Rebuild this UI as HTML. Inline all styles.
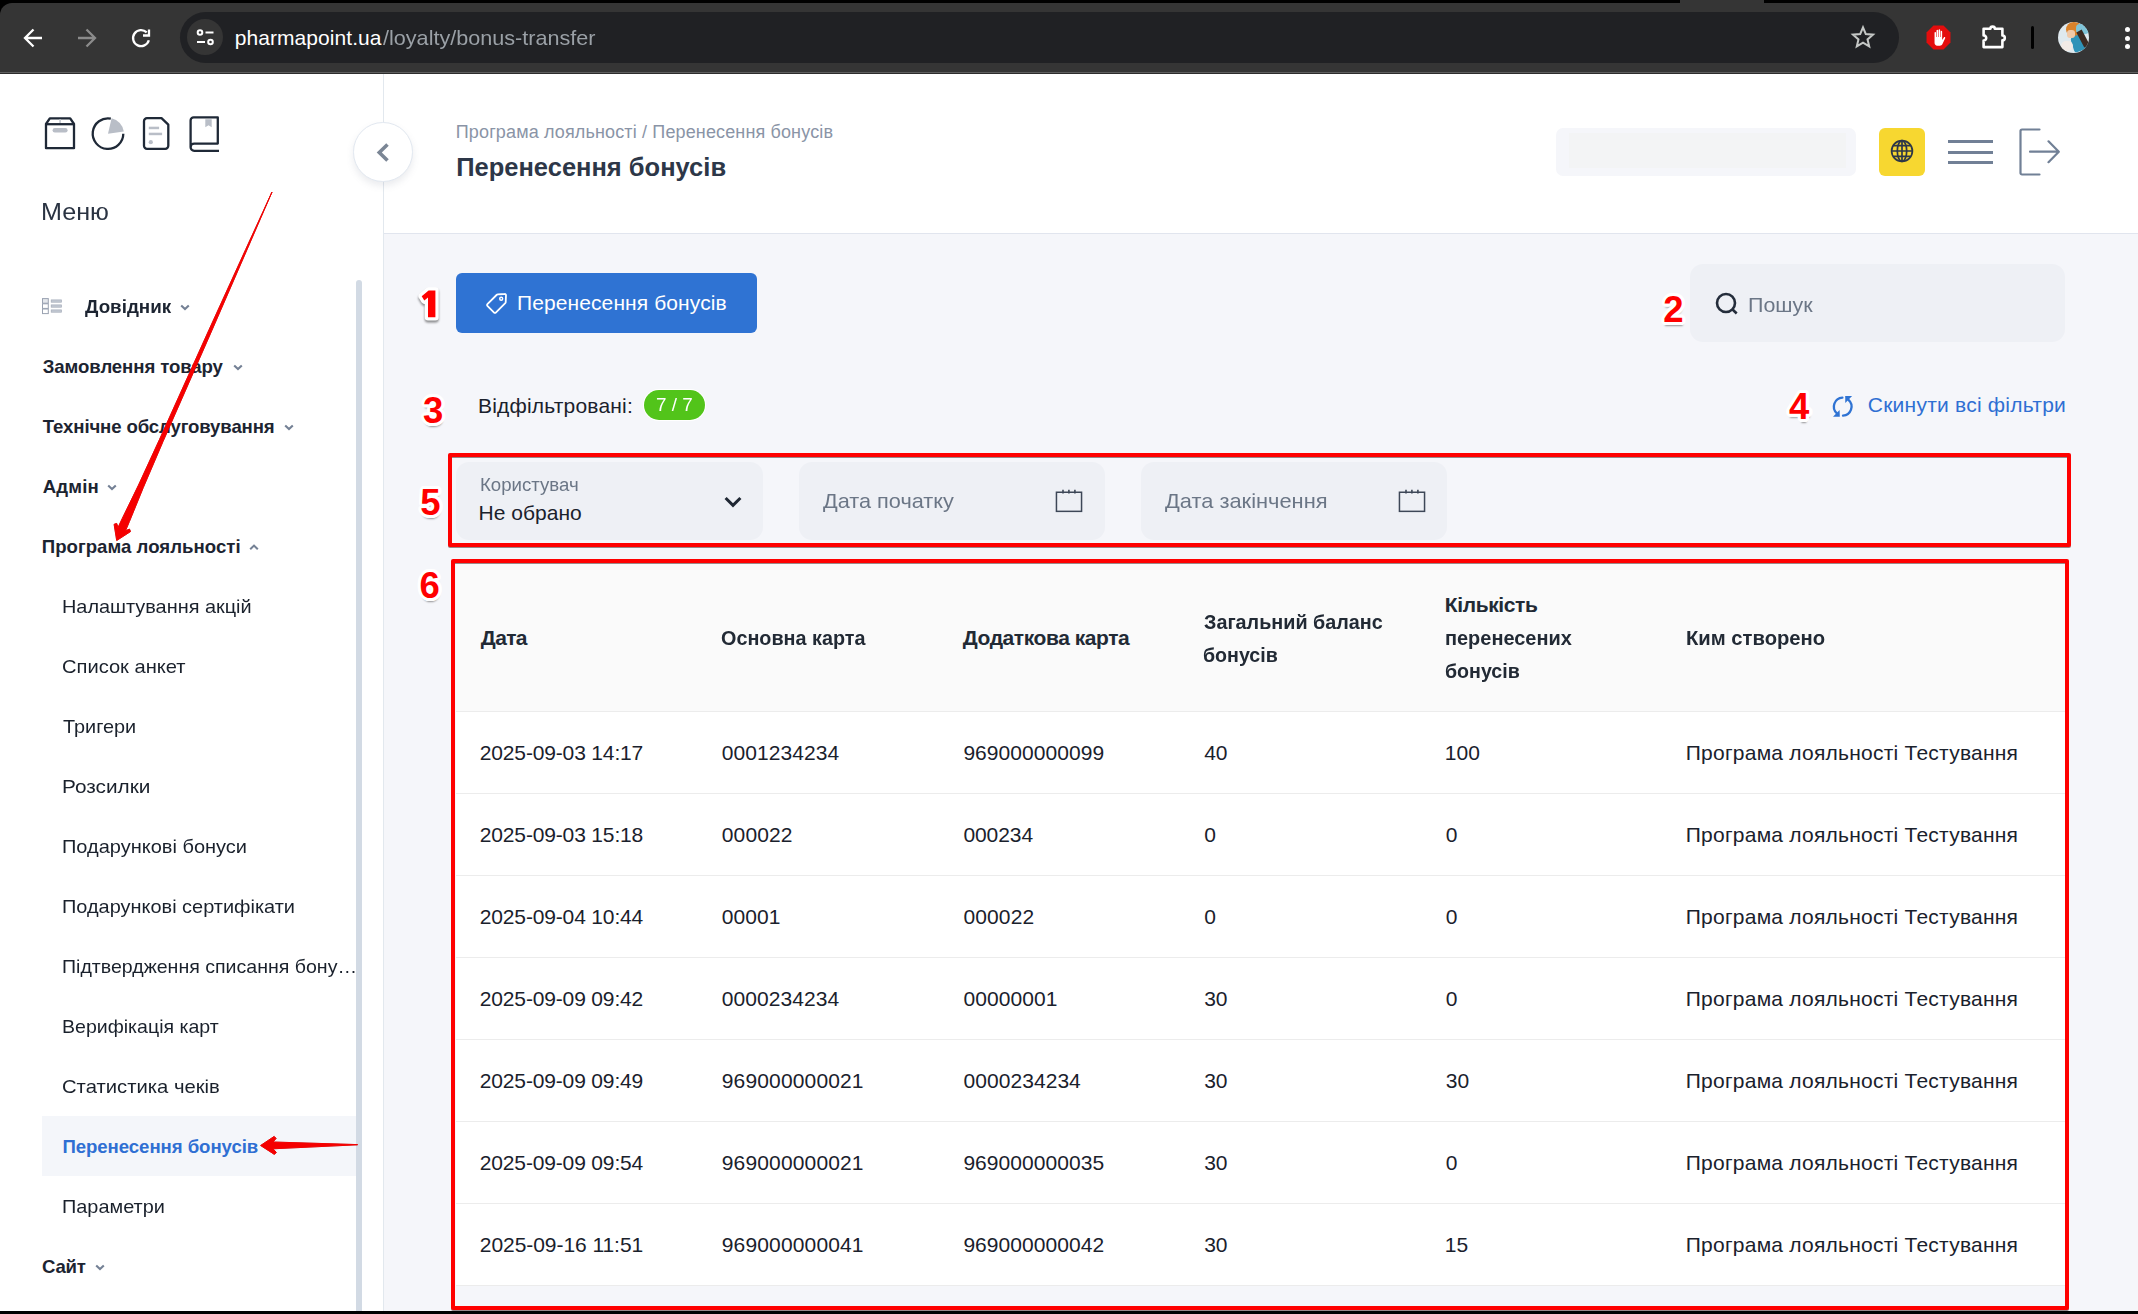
<!DOCTYPE html>
<html lang="uk">
<head>
<meta charset="utf-8">
<title>Перенесення бонусів</title>
<style>
*{box-sizing:border-box;margin:0;padding:0}
html,body{width:2138px;height:1314px;overflow:hidden;background:#f5f6fa;font-family:"Liberation Sans",sans-serif;color:#1f2733}
.abs{position:absolute}
.t{position:absolute;white-space:nowrap;line-height:1}
/* browser chrome */
#chrome{position:absolute;left:0;top:0;width:2138px;height:74px;background:#353535}
#chrome .blk{position:absolute;left:0;top:0;width:2138px;height:3px;background:#000}
#chrome .bline{position:absolute;left:0;top:72px;width:2138px;height:2px;background:linear-gradient(#5f5f5f 0,#5f5f5f 50%,#2d2d2d 50%,#2d2d2d 100%)}
#url{position:absolute;left:180px;top:12px;width:1719px;height:51px;border-radius:25.500px;background:#202124}
#url .site{position:absolute;left:7px;top:7px;width:36px;height:36px;border-radius:18px;background:#353535}
/* sidebar */
#side{position:absolute;left:0;top:74px;width:383px;height:1237px;background:#fff}
#sideb{position:absolute;left:383px;top:74px;width:1px;height:1237px;background:#e2e8ee}
#scr{position:absolute;left:356px;top:280px;width:6px;height:1031px;background:#d2dae4;border-radius:3px 3px 0 0}
.m1{font-weight:bold;font-size:19.5px;color:#1f2733}
.m2{font-size:19.5px;color:#1f2733}
/* header */
#hdr{position:absolute;left:384px;top:74px;width:1754px;height:159px;background:#fff}
#hdrb{position:absolute;left:384px;top:233px;width:1754px;height:1px;background:#e1e5ee}
#botblk{position:absolute;left:0;top:1311px;width:2138px;height:3px;background:#000}
.red{position:absolute;border:4px solid #f00;border-radius:2px;filter:drop-shadow(0 1px 0.500px rgba(40,0,0,.45))}
.num{position:absolute;font-weight:bold;color:#f00;font-size:36.500px;line-height:1;
 text-shadow:-2.200px -2.200px 0 #fff,2.200px -2.200px 0 #fff,-2.200px 2.200px 0 #fff,2.200px 2.200px 0 #fff,0 -3px 0 #fff,0 3px 0 #fff,-3px 0 0 #fff,3px 0 0 #fff,-3px 1.200px 0 #fff,3px 1.200px 0 #fff,-3px -1.200px 0 #fff,3px -1.200px 0 #fff,1.200px 3px 0 #fff,-1.200px 3px 0 #fff,1.200px -3px 0 #fff,-1.200px -3px 0 #fff,0.500px 4.200px 2px rgba(0,0,0,.4)}
</style>
</head>
<body>
<!-- BROWSER CHROME -->
<div id="chrome">
  <div class="blk"></div>
  <div style="position:absolute;left:0;top:3px;width:12px;height:12px;background:#000"></div>
  <div style="position:absolute;left:0;top:3px;width:24px;height:24px;border-radius:12px 0 0 0;background:#353535"></div>
  <!-- tab bump on black strip -->
  <div style="position:absolute;left:1680px;top:0;width:84px;height:3px;background:#353535"></div>
  <!-- back -->
  <svg class="abs" style="left:21px;top:26px" width="24" height="24" viewBox="0 0 24 24" fill="none" stroke="#fff" stroke-width="2.3" stroke-linecap="butt" stroke-linejoin="miter"><path d="M21 12H4.5M12.5 3.5L4 12l8.500 8.500"/></svg>
  <!-- forward -->
  <svg class="abs" style="left:75px;top:26px" width="24" height="24" viewBox="0 0 24 24" fill="none" stroke="#8b8b8b" stroke-width="2.3"><path d="M3 12h16.500M11.500 3.500L20 12l-8.500 8.500"/></svg>
  <!-- reload -->
  <svg class="abs" style="left:129px;top:26px" width="24" height="24" viewBox="0 0 24 24" fill="none" stroke="#fff" stroke-width="2.3"><path d="M19.800 14.200A8 8 0 1 1 17.700 6.400"/><path d="M20 3.500v6h-6" /></svg>
  <div id="url">
    <div class="site"></div>
    <svg class="abs" style="left:13px;top:13px" width="24" height="24" viewBox="0 0 24 24" fill="none" stroke="#fff" stroke-width="2"><circle cx="7" cy="7.500" r="2.300"/><path d="M12.500 7.500h8"/><circle cx="17.500" cy="17" r="2.300"/><path d="M4 17h8"/></svg>
    <!-- star -->
    <svg class="abs" style="left:1670px;top:12px" width="26" height="26" viewBox="0 0 24 24" fill="none" stroke="#c4c7c5" stroke-width="1.900" stroke-linejoin="miter"><path d="M12 3.200l2.600 6.100 6.600.55-5 4.350 1.500 6.450L12 17.200l-5.700 3.450 1.500-6.450-5-4.350 6.600-.55z"/></svg>
  </div>
  <!-- adblock -->
  <svg class="abs" style="left:1926px;top:25px" width="25" height="25" viewBox="0 0 24 24"><path d="M7.200 0.500h9.600l6.700 6.700v9.600l-6.700 6.700H7.200L0.500 16.800V7.200z" fill="#e40d0d"/><path d="M8.200 12.500V7.300c0-.9 1.400-.9 1.400 0v4.200h.5V5.300c0-.9 1.500-.9 1.500 0v6.200h.5V4.800c0-.9 1.500-.9 1.500 0v6.700h.5V6.300c0-.9 1.400-.9 1.400 0v8.200l1.600-2.500c.5-.8 1.700-.2 1.300.7l-2.600 5.500c-.5 1-1.400 1.600-2.500 1.600h-2.500c-1.600 0-2.600-1.200-2.600-2.800z" fill="#fff"/></svg>
  <!-- puzzle -->
  <svg class="abs" style="left:1981px;top:23px" width="28" height="28" viewBox="0 0 28 28" fill="none" stroke="#fff" stroke-width="2.600" stroke-linejoin="round"><path d="M2.600 5.800H9.400a2.200 2.200 0 0 1 4.400 0H21.400V12.500a2.400 2.400 0 0 1 0 4.800V24.100H2.600V17.600a2.600 2.600 0 0 0 0-5.200z"/></svg>
  <div class="abs" style="left:2031px;top:26px;width:3px;height:23px;background:#000;border-radius:1.500px"></div>
  <!-- avatar -->
  <div class="abs" style="left:2058px;top:22px;width:31px;height:31px;border-radius:50%;overflow:hidden;background:#dfe9ee">
    <div class="abs" style="left:8px;top:0;width:17px;height:15px;background:#d9822b;border-radius:8px 9px 6px 8px"></div>
    <div class="abs" style="left:18px;top:2px;width:13px;height:10px;background:#7fc4d8;border-radius:4px"></div>
    <div class="abs" style="left:14px;top:13px;width:14px;height:16px;background:#2f93b8;border-radius:4px 6px 6px 2px;transform:rotate(-18deg)"></div>
    <div class="abs" style="left:22px;top:8px;width:6px;height:17px;background:#3b2a22;transform:rotate(-28deg)"></div>
    <div class="abs" style="left:9px;top:8px;width:8px;height:8px;background:#f0c9a8;border-radius:3px"></div>
    <div class="abs" style="left:3px;top:19px;width:12px;height:10px;background:#f2ebe6;border-radius:5px"></div>
  </div>
  <!-- dots -->
  <div class="abs" style="left:2124.500px;top:27px;width:5px;height:5px;border-radius:50%;background:#fff"></div>
  <div class="abs" style="left:2124.500px;top:35.500px;width:5px;height:5px;border-radius:50%;background:#fff"></div>
  <div class="abs" style="left:2124.500px;top:44px;width:5px;height:5px;border-radius:50%;background:#fff"></div>
  <div class="bline"></div>
</div>

<!-- SIDEBAR -->
<div id="side"></div>
<div id="sideb"></div>
<div class="abs" style="left:42px;top:1116px;width:314px;height:60px;background:#f4f6fa"></div>
<div id="scr"></div>
<!-- top icons -->
<svg class="abs" style="left:43px;top:114px" width="34" height="38" viewBox="0 0 34 38" fill="none" stroke="#1f2937" stroke-width="2.300" stroke-linejoin="round">
  <path d="M3 10L6.800 4.300H27.200L31 10V34.200H3z"/><path d="M3 10.200H31"/>
  <rect x="9.600" y="14" width="15" height="4.400" rx="2.200" fill="#b9bec7" stroke="none"/>
  <rect x="16.200" y="5.400" width="1.800" height="3.600" fill="#c9cdd4" stroke="none"/>
</svg>
<svg class="abs" style="left:90px;top:114px" width="38" height="38" viewBox="0 0 38 38" fill="none">
  <path d="M20.800 4.600A15.300 15.300 0 1 0 33.300 19.800" stroke="#1f2937" stroke-width="2.300" stroke-linecap="butt"/>
  <path d="M18 19.800L21.600 4.200A15.800 15.800 0 0 1 33.800 17.400z" fill="#b9bec7"/>
</svg>
<svg class="abs" style="left:141px;top:114px" width="32" height="38" viewBox="0 0 32 38" fill="none" stroke="#1f2937" stroke-width="2.300" stroke-linejoin="round">
  <path d="M6 4.200H20.500L27.300 10.600V31.800a3 3 0 0 1-3 3H6a3 3 0 0 1-3-3V7.200a3 3 0 0 1 3-3z"/>
  <rect x="7.800" y="12.700" width="10.300" height="2.500" fill="#b9bec7" stroke="none"/>
  <rect x="7.800" y="18.700" width="13.300" height="2.500" fill="#b9bec7" stroke="none"/>
  <circle cx="9.800" cy="28.200" r="2.100" fill="#b9bec7" stroke="none"/>
</svg>
<svg class="abs" style="left:187px;top:114px" width="34" height="40" viewBox="0 0 34 40" fill="none" stroke="#1f2937" stroke-width="2.300" stroke-linejoin="round">
  <path d="M32 36.800H7.200a3.600 3.600 0 0 1 0-7.200H30.800V3.400H6.600a3 3 0 0 0-3 3V33.200"/>
  <path d="M18.300 5.200h6.400v8l-3.200-2-3.200 2z" fill="#b9bec7" stroke="none"/>
</svg>
<!-- dovidnyk icon -->
<svg class="abs" style="left:42px;top:298px" width="21" height="17" viewBox="0 0 21 17" fill="none" stroke="#9aa2b1" stroke-width="1">
  <rect x="0.500" y="0.600" width="5.800" height="4.600" fill="#e4e7ec"/><rect x="0.500" y="5.800" width="5.800" height="4.600"/><rect x="0.500" y="11" width="5.800" height="4.600"/>
  <rect x="9.200" y="1.900" width="10.200" height="2.300" fill="#c3c9d3" stroke="#a4abb8" stroke-width=".7"/>
  <rect x="9.200" y="6.900" width="10.200" height="2.300" fill="#c3c9d3" stroke="#a4abb8" stroke-width=".7"/>
  <rect x="9.200" y="11.900" width="10.200" height="2.300" fill="#c3c9d3" stroke="#a4abb8" stroke-width=".7"/>
</svg>
<!-- chevrons -->
<svg class="abs" style="left:180.2px;top:303.9px" width="10" height="7" viewBox="0 0 10 7" fill="none" stroke="#748195" stroke-width="2.100"><path d="M1.200 1.500l3.800 3.600 3.800-3.600"/></svg>
<svg class="abs" style="left:233.4px;top:364.1px" width="10" height="7" viewBox="0 0 10 7" fill="none" stroke="#748195" stroke-width="2.100"><path d="M1.200 1.500l3.800 3.600 3.800-3.600"/></svg>
<svg class="abs" style="left:283.5px;top:424px" width="10" height="7" viewBox="0 0 10 7" fill="none" stroke="#748195" stroke-width="2.100"><path d="M1.200 1.500l3.800 3.600 3.800-3.600"/></svg>
<svg class="abs" style="left:107.3px;top:483.8px" width="10" height="7" viewBox="0 0 10 7" fill="none" stroke="#748195" stroke-width="2.100"><path d="M1.200 1.500l3.800 3.600 3.800-3.600"/></svg>
<svg class="abs" style="left:249.2px;top:543.7px" width="10" height="7" viewBox="0 0 10 7" fill="none" stroke="#748195" stroke-width="2.100"><path d="M1.200 5.200l3.800-3.600 3.800 3.600"/></svg>
<svg class="abs" style="left:95.3px;top:1263.5px" width="10" height="7" viewBox="0 0 10 7" fill="none" stroke="#748195" stroke-width="2.100"><path d="M1.200 1.500l3.800 3.600 3.800-3.600"/></svg>

<!-- HEADER -->
<div id="hdr"></div>
<div id="hdrb"></div>
<div class="abs" style="left:1556px;top:128px;width:300px;height:48px;border-radius:7px;background:#f5f6fa"></div>
<div class="abs" style="left:1569px;top:133px;width:277px;height:35px;background:#f3f4f5"></div>
<div class="abs" style="left:1879px;top:128px;width:46px;height:48px;border-radius:6px;background:#f7d730"></div>
<svg class="abs" style="left:1889px;top:138px" width="26" height="26" viewBox="0 0 26 26" fill="none" stroke="#2d3748" stroke-width="1.700">
  <circle cx="13" cy="13" r="10.400"/><ellipse cx="13" cy="13" rx="4.700" ry="10.400"/><path d="M13 2.600v20.800M2.600 13h20.800M4.200 7.600h17.600M4.200 18.400h17.600"/>
</svg>
<div class="abs" style="left:1948px;top:140px;width:45px;height:3px;background:#718096"></div>
<div class="abs" style="left:1948px;top:150.700px;width:45px;height:3px;background:#718096"></div>
<div class="abs" style="left:1948px;top:161px;width:45px;height:3px;background:#718096"></div>
<svg class="abs" style="left:2016px;top:126px" width="46" height="52" viewBox="0 0 46 52" fill="none" stroke="#718096" stroke-width="2.200" stroke-linecap="round" stroke-linejoin="round">
  <path d="M23.500 3.500H6a1.500 1.500 0 0 0-1.500 1.500V47a1.500 1.500 0 0 0 1.500 1.500H23.500"/><path d="M14 25.700H42.500M32.500 15.300L42.800 25.700 32.500 36.200"/>
</svg>
<!-- toggle -->
<div class="abs" style="left:353px;top:122px;width:59.500px;height:59.500px;border-radius:50%;background:#fff;border:1px solid #e2e8f0;box-shadow:0 4px 7px rgba(100,110,130,.13)"></div>
<svg class="abs" style="left:374px;top:142px" width="18" height="21" viewBox="0 0 18 21" fill="none" stroke="#7b8695" stroke-width="3.600"><path d="M13.500 2.500L5.300 10.500l8.200 8"/></svg>

<!-- MAIN -->
<div class="abs" style="left:456px;top:273px;width:301px;height:60px;border-radius:6px;background:#2f73d3"></div>
<svg class="abs" style="left:485px;top:292px" width="23" height="23" viewBox="0 0 23 23" fill="none" stroke="#fff" stroke-width="1.800" stroke-linejoin="round">
  <path d="M12.800 2.300l6.900-.3a1.200 1.200 0 0 1 1.300 1.300l-.3 6.900a1.500 1.500 0 0 1-.45 1L10.800 20.600a1.200 1.200 0 0 1-1.700 0L2.400 13.900a1.200 1.200 0 0 1 0-1.700L11.800 2.750a1.500 1.500 0 0 1 1-.45z"/><circle cx="16.200" cy="6.800" r="1.500" stroke-width="1.400"/>
</svg>
<div class="abs" style="left:1690px;top:264px;width:375px;height:78px;border-radius:13px;background:#eef0f5"></div>
<svg class="abs" style="left:1713px;top:290px" width="27" height="27" viewBox="0 0 27 27" fill="none" stroke="#242d3b" stroke-width="2.600"><circle cx="13" cy="13" r="9"/><path d="M19.300 19.300l4.400 4.200"/></svg>
<div class="abs" style="left:644px;top:390px;width:61px;height:30px;border-radius:15px;background:#52c41a;box-shadow:0 0 0 1px #fff"></div>
<svg class="abs" style="left:1830px;top:394px" width="25" height="25" viewBox="0 0 25 25" fill="none" stroke="#2f73d3" stroke-width="2.300" stroke-linecap="round">
  <path d="M12.400 3.600A9 9 0 0 0 6.900 19.300"/><path d="M13 21.600A9 9 0 0 0 18.500 5.900"/>
  <path d="M3 22.800H9.800L9.600 16z" fill="#2f73d3" stroke="none"/><path d="M15.200 2.100H22.100L15.300 8.900z" fill="#2f73d3" stroke="none"/>
</svg>
<!-- filters -->
<div class="abs" style="left:456px;top:462px;width:307px;height:78px;border-radius:13px;background:#eef0f5"></div>
<div class="abs" style="left:799px;top:462px;width:306px;height:78px;border-radius:13px;background:#eef0f5"></div>
<div class="abs" style="left:1141px;top:462px;width:306px;height:78px;border-radius:13px;background:#eef0f5"></div>
<svg class="abs" style="left:723px;top:494px" width="20" height="16" viewBox="0 0 20 16" fill="none" stroke="#1f2733" stroke-width="3"><path d="M2.600 4l7.400 7.400L17.400 4"/></svg>
<svg class="abs" style="left:1055px;top:487.200px" width="29" height="26" viewBox="0 0 29 26" fill="none" stroke="#3d4757" stroke-width="1.500"><rect x="1.450" y="5.250" width="25.100" height="19.100"/><path d="M8 2.800v3.800M13.900 2.800v3.800M19.900 2.800v3.800" stroke-width="1.600"/></svg>
<svg class="abs" style="left:1397.500px;top:487.200px" width="29" height="26" viewBox="0 0 29 26" fill="none" stroke="#3d4757" stroke-width="1.500"><rect x="1.450" y="5.250" width="25.100" height="19.100"/><path d="M8 2.800v3.800M13.900 2.800v3.800M19.900 2.800v3.800" stroke-width="1.600"/></svg>
<!-- table -->
<div class="abs" style="left:456px;top:563px;width:1609px;height:148px;background:#fafafa"></div>
<div class="abs" style="left:456px;top:711px;width:1609px;height:575px;background:#fff"></div>
<div class="abs" style="left:456px;top:711px;width:1609px;height:1px;background:#ececec"></div>
<div class="abs" style="left:456px;top:793px;width:1609px;height:1px;background:#ececec"></div>
<div class="abs" style="left:456px;top:875px;width:1609px;height:1px;background:#ececec"></div>
<div class="abs" style="left:456px;top:957px;width:1609px;height:1px;background:#ececec"></div>
<div class="abs" style="left:456px;top:1039px;width:1609px;height:1px;background:#ececec"></div>
<div class="abs" style="left:456px;top:1121px;width:1609px;height:1px;background:#ececec"></div>
<div class="abs" style="left:456px;top:1203px;width:1609px;height:1px;background:#ececec"></div>
<div class="abs" style="left:456px;top:1285px;width:1609px;height:1px;background:#ececec"></div>

<div class="t" style="left:41.20px;top:200.73px;font-size:23px;color:#2a3342;transform:scaleX(1.0938);transform-origin:0 0;">Меню</div>
<div class="t" style="left:84.60px;top:297.76px;font-size:18.6px;color:#1c2431;font-weight:bold;transform:scaleX(1.0115);transform-origin:0 0;">Довідник</div>
<div class="t" style="left:42.80px;top:357.76px;font-size:18.6px;color:#1c2431;font-weight:bold;letter-spacing:-0.092px;">Замовлення товару</div>
<div class="t" style="left:42.80px;top:417.76px;font-size:18.6px;color:#1c2431;font-weight:bold;letter-spacing:-0.127px;">Технічне обслуговування</div>
<div class="t" style="left:42.80px;top:477.76px;font-size:18.6px;color:#1c2431;font-weight:bold;letter-spacing:0.118px;">Адмін</div>
<div class="t" style="left:41.80px;top:537.76px;font-size:18.6px;color:#1c2431;font-weight:bold;letter-spacing:0.027px;">Програма лояльності</div>
<div class="t" style="left:62.40px;top:597.76px;font-size:18.6px;color:#1a212c;transform:scaleX(1.0691);transform-origin:0 0;">Налаштування акцій</div>
<div class="t" style="left:62.40px;top:657.76px;font-size:18.6px;color:#1a212c;transform:scaleX(1.0818);transform-origin:0 0;">Список анкет</div>
<div class="t" style="left:63.40px;top:717.76px;font-size:18.6px;color:#1a212c;transform:scaleX(1.0685);transform-origin:0 0;">Тригери</div>
<div class="t" style="left:62.40px;top:777.76px;font-size:18.6px;color:#1a212c;transform:scaleX(1.1175);transform-origin:0 0;">Розсилки</div>
<div class="t" style="left:62.40px;top:837.76px;font-size:18.6px;color:#1a212c;transform:scaleX(1.0750);transform-origin:0 0;">Подарункові бонуси</div>
<div class="t" style="left:62.40px;top:897.76px;font-size:18.6px;color:#1a212c;transform:scaleX(1.0721);transform-origin:0 0;">Подарункові сертифікати</div>
<div class="t" style="left:62.40px;top:957.76px;font-size:18.6px;color:#1a212c;transform:scaleX(1.0517);transform-origin:0 0;">Підтвердження списання бону…</div>
<div class="t" style="left:62.40px;top:1017.76px;font-size:18.6px;color:#1a212c;transform:scaleX(1.0512);transform-origin:0 0;">Верифікація карт</div>
<div class="t" style="left:62.40px;top:1077.76px;font-size:18.6px;color:#1a212c;transform:scaleX(1.0882);transform-origin:0 0;">Статистика чеків</div>
<div class="t" style="left:62.40px;top:1137.76px;font-size:18.6px;color:#2f6fd3;font-weight:bold;letter-spacing:-0.053px;">Перенесення бонусів</div>
<div class="t" style="left:62.40px;top:1197.76px;font-size:18.6px;color:#1a212c;transform:scaleX(1.0692);transform-origin:0 0;">Параметри</div>
<div class="t" style="left:42.00px;top:1257.76px;font-size:18.6px;color:#1c2431;font-weight:bold;letter-spacing:-0.241px;">Сайт</div>
<div class="t" style="left:455.80px;top:122.66px;font-size:18px;color:#8a94a6;letter-spacing:0.138px;">Програма лояльності / Перенесення бонусів</div>
<div class="t" style="left:456.20px;top:155.21px;font-size:25.5px;color:#2d3748;font-weight:bold;">Перенесення бонусів</div>
<div class="t" style="left:517.00px;top:292.02px;font-size:21px;color:#ffffff;letter-spacing:0.101px;">Перенесення бонусів</div>
<div class="t" style="left:1748.00px;top:293.62px;font-size:21px;color:#6b7686;transform:scaleX(1.0201);transform-origin:0 0;">Пошук</div>
<div class="t" style="left:478.00px;top:395.22px;font-size:21px;color:#1a212c;letter-spacing:0.194px;">Відфільтровані:</div>
<div class="t" style="left:655.80px;top:396.24px;font-size:18.5px;color:#ffffff;transform:scaleX(1.0209);transform-origin:0 0;">7 / 7</div>
<div class="t" style="left:1867.80px;top:393.82px;font-size:21px;color:#2f6fd3;letter-spacing:0.232px;">Скинути всі фільтри</div>
<div class="t" style="left:479.60px;top:476.46px;font-size:18px;color:#6b7686;transform:scaleX(1.0353);transform-origin:0 0;">Користувач</div>
<div class="t" style="left:478.60px;top:502.12px;font-size:21px;color:#1a212c;letter-spacing:0.007px;">Не обрано</div>
<div class="t" style="left:822.80px;top:489.62px;font-size:21px;color:#6b7686;transform:scaleX(1.0328);transform-origin:0 0;">Дата початку</div>
<div class="t" style="left:1165.00px;top:489.62px;font-size:21px;color:#6b7686;transform:scaleX(1.0403);transform-origin:0 0;">Дата закінчення</div>
<div class="t" style="left:480.80px;top:627.22px;font-size:21px;color:#222a35;font-weight:bold;letter-spacing:-0.623px;">Дата</div>
<div class="t" style="left:721.40px;top:627.22px;font-size:21px;color:#222a35;font-weight:bold;transform:scaleX(0.9416);transform-origin:0 0;">Основна карта</div>
<div class="t" style="left:962.80px;top:627.22px;font-size:21px;color:#222a35;font-weight:bold;letter-spacing:-0.428px;">Додаткова карта</div>
<div class="t" style="left:1204.40px;top:610.92px;font-size:21px;color:#222a35;font-weight:bold;transform:scaleX(0.9416);transform-origin:0 0;">Загальний баланс</div>
<div class="t" style="left:1203.40px;top:643.92px;font-size:21px;color:#222a35;font-weight:bold;transform:scaleX(0.9341);transform-origin:0 0;">бонусів</div>
<div class="t" style="left:1444.80px;top:594.42px;font-size:21px;color:#222a35;font-weight:bold;letter-spacing:-0.385px;">Кількість</div>
<div class="t" style="left:1444.80px;top:627.42px;font-size:21px;color:#222a35;font-weight:bold;transform:scaleX(0.9490);transform-origin:0 0;">перенесених</div>
<div class="t" style="left:1444.80px;top:660.42px;font-size:21px;color:#222a35;font-weight:bold;transform:scaleX(0.9341);transform-origin:0 0;">бонусів</div>
<div class="t" style="left:1685.80px;top:627.22px;font-size:21px;color:#222a35;font-weight:bold;transform:scaleX(0.9629);transform-origin:0 0;">Ким створено</div>
<div class="t" style="left:479.80px;top:742.22px;font-size:21px;color:#1a212c;letter-spacing:-0.155px;">2025-09-03 14:17</div>
<div class="t" style="left:721.80px;top:742.22px;font-size:21px;color:#1a212c;letter-spacing:0.069px;">0001234234</div>
<div class="t" style="left:963.40px;top:742.22px;font-size:21px;color:#1a212c;letter-spacing:0.054px;">969000000099</div>
<div class="t" style="left:1204.20px;top:742.22px;font-size:21px;color:#1a212c;">40</div>
<div class="t" style="left:1444.80px;top:742.22px;font-size:21px;color:#1a212c;">100</div>
<div class="t" style="left:1685.80px;top:742.22px;font-size:21px;color:#1a212c;letter-spacing:0.234px;">Програма лояльності Тестування</div>
<div class="t" style="left:479.80px;top:824.22px;font-size:21px;color:#1a212c;letter-spacing:-0.155px;">2025-09-03 15:18</div>
<div class="t" style="left:721.80px;top:824.22px;font-size:21px;color:#1a212c;letter-spacing:0.132px;">000022</div>
<div class="t" style="left:963.40px;top:824.22px;font-size:21px;color:#1a212c;letter-spacing:-0.068px;">000234</div>
<div class="t" style="left:1204.20px;top:824.22px;font-size:21px;color:#1a212c;">0</div>
<div class="t" style="left:1445.80px;top:824.22px;font-size:21px;color:#1a212c;">0</div>
<div class="t" style="left:1685.80px;top:824.22px;font-size:21px;color:#1a212c;letter-spacing:0.234px;">Програма лояльності Тестування</div>
<div class="t" style="left:479.80px;top:906.22px;font-size:21px;color:#1a212c;letter-spacing:-0.155px;">2025-09-04 10:44</div>
<div class="t" style="left:721.80px;top:906.22px;font-size:21px;color:#1a212c;letter-spacing:0.038px;">00001</div>
<div class="t" style="left:963.40px;top:906.22px;font-size:21px;color:#1a212c;letter-spacing:0.132px;">000022</div>
<div class="t" style="left:1204.20px;top:906.22px;font-size:21px;color:#1a212c;">0</div>
<div class="t" style="left:1445.80px;top:906.22px;font-size:21px;color:#1a212c;">0</div>
<div class="t" style="left:1685.80px;top:906.22px;font-size:21px;color:#1a212c;letter-spacing:0.234px;">Програма лояльності Тестування</div>
<div class="t" style="left:479.80px;top:988.22px;font-size:21px;color:#1a212c;letter-spacing:-0.155px;">2025-09-09 09:42</div>
<div class="t" style="left:721.80px;top:988.22px;font-size:21px;color:#1a212c;letter-spacing:0.069px;">0000234234</div>
<div class="t" style="left:963.40px;top:988.22px;font-size:21px;color:#1a212c;letter-spacing:0.092px;">00000001</div>
<div class="t" style="left:1204.20px;top:988.22px;font-size:21px;color:#1a212c;">30</div>
<div class="t" style="left:1445.80px;top:988.22px;font-size:21px;color:#1a212c;">0</div>
<div class="t" style="left:1685.80px;top:988.22px;font-size:21px;color:#1a212c;letter-spacing:0.234px;">Програма лояльності Тестування</div>
<div class="t" style="left:479.80px;top:1070.22px;font-size:21px;color:#1a212c;letter-spacing:-0.155px;">2025-09-09 09:49</div>
<div class="t" style="left:721.80px;top:1070.22px;font-size:21px;color:#1a212c;letter-spacing:0.145px;">969000000021</div>
<div class="t" style="left:963.40px;top:1070.22px;font-size:21px;color:#1a212c;letter-spacing:0.069px;">0000234234</div>
<div class="t" style="left:1204.20px;top:1070.22px;font-size:21px;color:#1a212c;">30</div>
<div class="t" style="left:1445.80px;top:1070.22px;font-size:21px;color:#1a212c;">30</div>
<div class="t" style="left:1685.80px;top:1070.22px;font-size:21px;color:#1a212c;letter-spacing:0.234px;">Програма лояльності Тестування</div>
<div class="t" style="left:479.80px;top:1152.22px;font-size:21px;color:#1a212c;letter-spacing:-0.155px;">2025-09-09 09:54</div>
<div class="t" style="left:721.80px;top:1152.22px;font-size:21px;color:#1a212c;letter-spacing:0.145px;">969000000021</div>
<div class="t" style="left:963.40px;top:1152.22px;font-size:21px;color:#1a212c;letter-spacing:0.054px;">969000000035</div>
<div class="t" style="left:1204.20px;top:1152.22px;font-size:21px;color:#1a212c;">30</div>
<div class="t" style="left:1445.80px;top:1152.22px;font-size:21px;color:#1a212c;">0</div>
<div class="t" style="left:1685.80px;top:1152.22px;font-size:21px;color:#1a212c;letter-spacing:0.234px;">Програма лояльності Тестування</div>
<div class="t" style="left:479.80px;top:1234.22px;font-size:21px;color:#1a212c;letter-spacing:-0.057px;">2025-09-16 11:51</div>
<div class="t" style="left:721.80px;top:1234.22px;font-size:21px;color:#1a212c;letter-spacing:0.145px;">969000000041</div>
<div class="t" style="left:963.40px;top:1234.22px;font-size:21px;color:#1a212c;letter-spacing:0.054px;">969000000042</div>
<div class="t" style="left:1204.20px;top:1234.22px;font-size:21px;color:#1a212c;">30</div>
<div class="t" style="left:1444.80px;top:1234.22px;font-size:21px;color:#1a212c;">15</div>
<div class="t" style="left:1685.80px;top:1234.22px;font-size:21px;color:#1a212c;letter-spacing:0.234px;">Програма лояльності Тестування</div>
<div class="t" style="left:234.80px;top:27.22px;font-size:21px;color:#ffffff;letter-spacing:0.055px;">pharmapoint.ua</div>
<div class="t" style="left:383.20px;top:27.22px;font-size:21px;color:#9aa0a6;transform:scaleX(1.0289);transform-origin:0 0;">/loyalty/bonus-transfer</div>

<!-- ANNOTATIONS -->
<div class="red" style="left:448px;top:453px;width:1623px;height:94px"></div>
<div class="red" style="left:451px;top:559px;width:1618px;height:751px"></div>
<svg class="abs" style="left:0;top:0;filter:drop-shadow(0.600px 0.800px 0.500px rgba(70,0,0,.38))" width="420" height="1314" viewBox="0 0 420 1314">
  <path fill="#f50000" stroke="#f50000" stroke-width="1" stroke-linejoin="round" d="M116.7 540.5L130.5 531.6L129.5 529.1L125.5 530.8L129.4 521.6L143.4 487.3L163.1 441.3L211.8 330.6L246.9 249.9L272.0 192.0L272.0 192.0L245.7 249.4L209.2 329.4L159.4 439.7L138.5 485.1L122.3 518.4L118.0 527.5L116.7 523.4L114.1 524.3z"/>
  <path fill="#f50000" stroke="#f50000" stroke-width="1" stroke-linejoin="round" d="M260.6 1145.5L274.4 1154.4L276.3 1152.4L273.0 1148.8L357.5 1144.8L357.5 1144.6L273.0 1142.0L276.1 1138.4L274.2 1136.4z"/>
</svg>
<svg class="abs" style="left:410px;top:280px;filter:drop-shadow(0.500px 2px 1px rgba(0,0,0,.45))" width="40" height="50" viewBox="410 280 40 50"><path d="M428.600 290.500H435.400V317.300H428V297.600L424.300 300.500 421.700 296.300z" fill="#fff" stroke="#fff" stroke-width="6.500" stroke-linejoin="round"/><path d="M428.600 290.500H435.400V317.300H428V297.600L424.300 300.500 421.700 296.300z" fill="#f00"/></svg>
<div class="num" style="left:1663.300px;top:291.500px">2</div>
<div class="num" style="left:422.900px;top:393.400px">3</div>
<div class="num" style="left:1789px;top:389.100px">4</div>
<div class="num" style="left:420.300px;top:485.100px">5</div>
<div class="num" style="left:419.600px;top:567.600px">6</div>

<div id="botblk"></div>
</body>
</html>
